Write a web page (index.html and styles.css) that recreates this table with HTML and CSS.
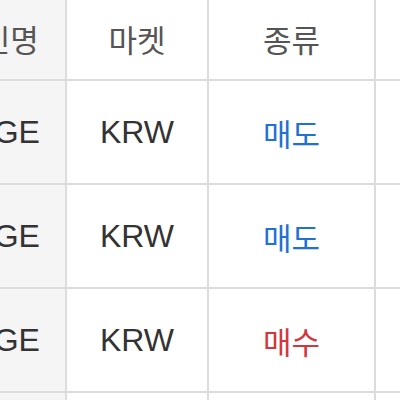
FILE: index.html
```html
<!DOCTYPE html>
<html lang="ko">
<head>
<meta charset="utf-8">
<link rel="stylesheet" href="styles.css">
</head>
<body>
<div class="table">
  <div class="cell head first shifted">코인명</div>
  <div class="cell head">마켓</div>
  <div class="cell head">종류</div>
  <div class="cell head"></div>

  <div class="cell first body">RANGE</div>
  <div class="cell body">KRW</div>
  <div class="cell body sell">매도</div>
  <div class="cell body"></div>

  <div class="cell first body">RANGE</div>
  <div class="cell body">KRW</div>
  <div class="cell body sell">매도</div>
  <div class="cell body"></div>

  <div class="cell first body">RANGE</div>
  <div class="cell body">KRW</div>
  <div class="cell body buy">매수</div>
  <div class="cell body"></div>

  <div class="cell first body"></div>
  <div class="cell body"></div>
  <div class="cell body"></div>
  <div class="cell body"></div>
</div>
</body>
</html>
```
FILE: styles.css
```css
html, body {
  margin: 0;
  padding: 0;
  background: #ffffff;
  overflow: hidden;
}
body {
  width: 400px;
  height: 400px;
  font-family: "Liberation Sans", "Noto Sans CJK KR", sans-serif;
}
.table {
  margin-left: -95px;
  width: 571px;
  display: grid;
  grid-template-columns: 160px 140px 165px 100px;
  grid-template-rows: 79px 102px 102px 102px 102px;
  gap: 2px;
  background: #dcdcdc;
}
.cell {
  background: #ffffff;
  display: flex;
  align-items: center;
  justify-content: center;
  font-size: 32px;
  color: #333333;
  white-space: nowrap;
  overflow: hidden;
}
.cell.first {
  background: #f5f5f5;
}
.cell.first.body {
  padding-right: 4px;
}
.head {
  color: #555555;
  font-size: 31px;
  padding-bottom: 3px;
}
.head.shifted {
  padding-left: 22px;
}
.sell {
  color: #1f72d2;
  font-size: 31px;
}
.buy {
  color: #d2373d;
  font-size: 31px;
}
```
